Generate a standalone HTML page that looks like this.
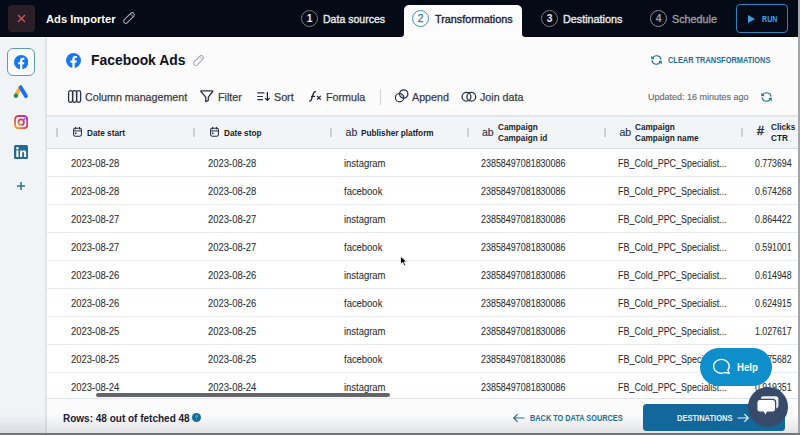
<!DOCTYPE html>
<html><head><meta charset="utf-8">
<style>
*{box-sizing:border-box;margin:0;padding:0}
html,body{width:800px;height:435px;overflow:hidden;background:#9c9ea1}
body{font-family:"Liberation Sans",sans-serif;position:relative}
.a{position:absolute;white-space:nowrap;line-height:1}
svg.a{line-height:normal}
#win{position:absolute;left:0;top:0;width:798px;height:433px;background:#fbfbfc;overflow:hidden}
.dk{position:absolute;background:#050b16}
.close{left:7.5px;top:5px;width:27px;height:27.3px;border-radius:4px;background:#2a1f27}
.ttl{color:#fff;font-weight:700;font-size:11.2px;left:46px;top:13.8px}
.step{color:#e8eaec;font-size:10.8px;top:13.7px;-webkit-text-stroke:0.35px currentColor}
.circ{position:absolute;width:17px;height:17px;border-radius:50%;border:1.2px solid #76797e;top:10px;color:#e6e8ea;font-size:10.3px;font-weight:700;text-align:center;line-height:16px}
.run{left:736px;top:4px;width:52px;height:29px;border:1.1px solid #2f84ba;border-radius:4px}
#side{position:absolute;left:0;top:38px;width:47px;height:395px;background:#f0f4f7;border-right:2px solid #e0e4e8}
.sel{left:7px;top:48px;width:28px;height:28px;border:1.3px solid #5d9bb9;border-radius:6px;background:#f8fafb}
.tb{color:#3b3e47;font-size:10.7px;top:91.8px;-webkit-text-stroke:0.25px currentColor}
.blue{color:#236e99}
#table{position:absolute;left:47px;top:115px;width:751px;height:284px;background:#fff;border-top:2px solid #e2e5e9;border-bottom:1px solid #e2e5e9;overflow:hidden}
.th{position:absolute;left:-1px;top:0;width:752px;height:32px;background:#f1f5f8;border-bottom:1px solid #d9dde2}
.row{position:absolute;left:-1px;width:752px;height:28px;border-bottom:1px solid #e8ebee;background:#fff}
.cell{position:absolute;top:10.4px;font-size:10px;line-height:1;color:#2c2f35;-webkit-text-stroke:0.08px #2c2f35;white-space:nowrap;transform-origin:0 0;transform:scaleX(0.945)}
.c85{transform:scaleX(0.893)}
.c83{transform:scaleX(0.877)}
.hd{position:absolute;font-size:9.2px;font-weight:700;color:#1b1e28;white-space:nowrap;line-height:1;transform-origin:0 0;transform:scaleX(0.895)}
.hd2{position:absolute;top:4.9px;font-size:9.2px;font-weight:700;color:#1b1e28;white-space:nowrap;line-height:11px;transform-origin:0 0;transform:scaleX(0.895)}
.dv{position:absolute;top:10.5px;width:1.4px;margin-left:-0.6px;height:9.5px;background:#cdd1d5}
.ic{position:absolute}
.ab{position:absolute;top:9.7px;font-size:10.5px;line-height:1;color:#2f3349;white-space:nowrap;-webkit-text-stroke:0.15px #2f3349}
</style></head>
<body>
<div id="win">
  <!-- header -->
  <div class="dk" style="left:0;top:0;width:404px;height:37px;border-bottom-right-radius:4px;box-shadow:inset 0 -1px 0 #000205"></div>
  <div class="dk" style="left:522px;top:0;width:276px;height:37px;border-bottom-left-radius:4px;box-shadow:inset 0 -1px 0 #000205"></div>
  <div class="dk" style="left:400px;top:0;width:126px;height:10px"></div>
  <div class="a" style="left:404px;top:5px;width:118px;height:40px;background:#fcfcfd;border-radius:5px 5px 0 0"></div>

  <div class="a close"></div>
  <svg class="a" style="left:16.6px;top:14px" width="9" height="9" viewBox="0 0 9 9"><path d="M1 1L8 8M8 1L1 8" stroke="#e3524f" stroke-width="1.2"/></svg>
  <div class="a ttl">Ads Importer</div>
  <svg class="a" style="left:120.5px;top:10.25px" width="16" height="16" viewBox="0 0 16 16"><g transform="rotate(-45 8 8)"><rect x="1.4" y="5.9" width="13.2" height="4.2" rx="2.1" fill="none" stroke="#aeb4bb" stroke-width="1"/><path d="M11.9 5.9V10.1" stroke="#aeb4bb" stroke-width="0.9"/></g></svg>

  <div class="circ" style="left:301px">1</div>
  <div class="a step" style="left:323px;transform-origin:0 0;transform:scaleX(0.975)">Data sources</div>
  <div class="circ" style="left:412px;border-color:#3b8fb9;color:#2b7aa6;font-weight:400;-webkit-text-stroke:0.25px #2b7aa6">2</div>
  <div class="a step" style="left:435px;color:#1d2235">Transformations</div>
  <div class="circ" style="left:541px">3</div>
  <div class="a step" style="left:563px">Destinations</div>
  <div class="circ" style="left:650px;color:#9c9ea2;border-color:#8d9094">4</div>
  <div class="a step" style="left:672px;color:#9c9ea2">Schedule</div>
  <div class="a run"></div>
  <svg class="a" style="left:748px;top:14.6px" width="7" height="8" viewBox="0 0 7 8"><path d="M0 0L7 4L0 8Z" fill="#3d9fd8"/></svg>
  <div class="a" style="left:761.8px;top:14.5px;font-size:8.3px;font-weight:700;color:#3ea3de;transform-origin:0 0;transform:scaleX(0.86)">RUN</div>

  <!-- sidebar -->
  <div id="side"></div>
  <div class="a sel"></div>


  <!-- sidebar icons -->
  <svg class="a" style="left:13.8px;top:54.8px" width="14.4" height="14.4" viewBox="0 0 1024 1024"><circle cx="512" cy="512" r="512" fill="#1877f2"/><path d="M711.3,660,734,512H592V415.96C592,375.47,611.84,336,675.44,336H740V210s-58.59-10-114.61-10C508.44,200,432,270.88,432,399.2V512H302V660H432v357.78a517.58,517.58,0,0,0,160,0V660Z" fill="#fff"/></svg>
  <svg class="a" style="left:12px;top:84px" width="18" height="16" viewBox="0 0 18 16"><path d="M8.4 3.4L3.9 11.3" stroke="#f4b23f" stroke-width="3.9" stroke-linecap="round"/><path d="M8.7 3.4L13.9 12.1" stroke="#1c6ef5" stroke-width="3.9" stroke-linecap="round"/><circle cx="3.9" cy="11.7" r="2.2" fill="#2e8b48"/></svg>
  <svg class="a" style="left:14px;top:114.7px" width="14.3" height="14.3" viewBox="0 0 14 14"><defs><linearGradient id="ig" x1="0" y1="1" x2="1" y2="0"><stop offset="0" stop-color="#f9a23a"/><stop offset="0.5" stop-color="#e8394f"/><stop offset="1" stop-color="#a03bb5"/></linearGradient></defs><rect x="1" y="1" width="12" height="12" rx="3.3" fill="none" stroke="url(#ig)" stroke-width="1.9"/><circle cx="7" cy="7" r="2.7" fill="none" stroke="url(#ig)" stroke-width="1.8"/><circle cx="10.4" cy="3.6" r="0.9" fill="#c0398f"/></svg>
  <div class="a" style="left:14px;top:145px;width:14px;height:14px;background:#1d6a9b;border-radius:1.5px"></div>
  <svg class="a" style="left:14px;top:145px" width="14" height="14" viewBox="0 0 14 14"><rect x="2.3" y="5.4" width="2.2" height="6.6" fill="#fff"/><circle cx="3.4" cy="3.3" r="1.3" fill="#fff"/><path d="M6.1 12V5.4H8.2V6.4Q8.9 5.2 10.2 5.2Q12.2 5.2 12.2 7.7V12H10.1V8.2Q10.1 7 9.2 7Q8.2 7 8.2 8.3V12Z" fill="#fff"/></svg>
  <svg class="a" style="left:16px;top:180.5px" width="10" height="10" viewBox="0 0 10 10"><path d="M5 1V9M1 5H9" stroke="#2a6f93" stroke-width="1.5"/></svg>

  <!-- title icons -->
  <svg class="a" style="left:66px;top:52.5px" width="15" height="15" viewBox="0 0 1024 1024"><circle cx="512" cy="512" r="512" fill="#1877f2"/><path d="M711.3,660,734,512H592V415.96C592,375.47,611.84,336,675.44,336H740V210s-58.59-10-114.61-10C508.44,200,432,270.88,432,399.2V512H302V660H432v357.78a517.58,517.58,0,0,0,160,0V660Z" fill="#fff"/></svg>
  <svg class="a" style="left:191.2px;top:53px" width="15" height="15" viewBox="0 0 15 15"><g transform="rotate(-45 7.5 7.5)"><rect x="1.4" y="5.4" width="12.2" height="4.2" rx="2.1" fill="none" stroke="#a3a8ae" stroke-width="1.05"/><path d="M10.9 5.4V9.6" stroke="#a3a8ae" stroke-width="0.9"/></g></svg>

  <!-- toolbar icons -->
  <svg class="a" style="left:67px;top:89px" width="15" height="15" viewBox="0 0 15 15"><rect x="1.6" y="1.6" width="4" height="11.8" rx="1.8" fill="none" stroke="#2d3146" stroke-width="1.3"/><rect x="5.6" y="1.6" width="4" height="11.8" rx="1.8" fill="none" stroke="#2d3146" stroke-width="1.3"/><rect x="9.6" y="1.6" width="4" height="11.8" rx="1.8" fill="none" stroke="#2d3146" stroke-width="1.3"/></svg>
  <svg class="a" style="left:199px;top:89px" width="16" height="15" viewBox="0 0 16 15"><path d="M2.2 1.9H13.4Q14.1 1.9 13.7 2.5L9.3 8.1V11.4L6.7 12.6V8.1L1.9 2.5Q1.5 1.9 2.2 1.9Z" fill="none" stroke="#2d3146" stroke-width="1.25" stroke-linejoin="round"/></svg>
  <svg class="a" style="left:256px;top:90px" width="16" height="12" viewBox="0 0 16 12"><path d="M1.3 2.9H8.4M1.3 6.5H7M1.3 9.6H7" stroke="#2d3146" stroke-width="1.2"/><path d="M11.4 1.9V10.3M9.1 8.1L11.4 10.4L13.7 8.1" fill="none" stroke="#1f2336" stroke-width="1.25"/></svg>
  <svg class="a" style="left:307px;top:89px" width="16" height="14" viewBox="0 0 16 14"><path d="M2.2 11.8Q3.5 12.6 4.3 10.8L6.6 4Q7.3 2.2 8.9 2.8" fill="none" stroke="#1f2336" stroke-width="1.3"/><path d="M4 7.4H8" stroke="#1f2336" stroke-width="1.2"/><path d="M10 6.9L13.8 10.6M13.8 6.9L10 10.6" stroke="#1f2336" stroke-width="1.3"/></svg>
  <svg class="a" style="left:394px;top:89px" width="16" height="16" viewBox="0 0 16 16"><circle cx="5.6" cy="8.7" r="4.2" fill="none" stroke="#2d3146" stroke-width="1.2"/><circle cx="9.7" cy="5" r="4.2" fill="none" stroke="#2d3146" stroke-width="1.2"/><path d="M6.2 4.9L9.6 8.3" stroke="#555a6c" stroke-width="0.8"/></svg>
  <svg class="a" style="left:461px;top:91px" width="16" height="12" viewBox="0 0 16 12"><circle cx="5.5" cy="5.8" r="4.4" fill="none" stroke="#2d3146" stroke-width="1.3"/><circle cx="10.3" cy="5.8" r="4.4" fill="none" stroke="#2d3146" stroke-width="1.3"/></svg>

  <svg class="a" style="left:650px;top:54px" width="13" height="12" viewBox="0 0 13 12"><path d="M2.4 4.4A4.6 4.6 0 0 1 11.1 5.6" fill="none" stroke="#1f6f9a" stroke-width="1.15"/><path d="M10.6 7.6A4.6 4.6 0 0 1 1.9 6.4" fill="none" stroke="#1f6f9a" stroke-width="1.15"/><path d="M1.2 1.8L1.3 5.3L4.6 4.9Z" fill="#1f6f9a"/><path d="M11.8 10.2L11.7 6.7L8.4 7.1Z" fill="#1f6f9a"/></svg>
  <svg class="a" style="left:759.5px;top:90.5px" width="13" height="12" viewBox="0 0 13 12"><path d="M2.4 4.4A4.6 4.6 0 0 1 11.1 5.6" fill="none" stroke="#1f6f9a" stroke-width="1.15"/><path d="M10.6 7.6A4.6 4.6 0 0 1 1.9 6.4" fill="none" stroke="#1f6f9a" stroke-width="1.15"/><path d="M1.2 1.8L1.3 5.3L4.6 4.9Z" fill="#1f6f9a"/><path d="M11.8 10.2L11.7 6.7L8.4 7.1Z" fill="#1f6f9a"/></svg>

  <!-- title + toolbar -->
  <div class="a" style="left:91px;top:54px;font-size:13.9px;font-weight:700;color:#0e1321">Facebook Ads</div>
  <div class="a tb" style="left:85px">Column management</div>
  <div class="a tb" style="left:218px">Filter</div>
  <div class="a tb" style="left:274px">Sort</div>
  <div class="a tb" style="left:326px">Formula</div>
  <div class="a" style="left:380px;top:89px;width:1px;height:16px;background:#cfd3d7"></div>
  <div class="a tb" style="left:412px">Append</div>
  <div class="a tb" style="left:480px">Join data</div>
  <div class="a blue" style="left:668px;top:56px;font-size:8.5px;font-weight:700;transform-origin:0 0;transform:scaleX(0.872)">CLEAR TRANSFORMATIONS</div>
  <div class="a" style="left:648px;top:92.3px;font-size:9.8px;color:#62656d;-webkit-text-stroke:0.1px #62656d;transform-origin:0 0;transform:scaleX(0.918)">Updated: 16 minutes ago</div>

  <!-- table -->
  <div id="table">
    <div class="th">
      <div class="dv" style="left:11px"></div><div class="dv" style="left:148px"></div><div class="dv" style="left:285px"></div><div class="dv" style="left:422px"></div><div class="dv" style="left:559px"></div><div class="dv" style="left:696px"></div>
      <svg class="ic" style="left:27px;top:9.5px" width="9" height="10" viewBox="0 0 9 10"><rect x="0.55" y="1.2" width="7.9" height="8" rx="1.6" fill="none" stroke="#2d3146" stroke-width="1.05"/><path d="M2.5 0.2V1.8M6.5 0.2V1.8" stroke="#2d3146" stroke-width="1.2" stroke-linecap="round"/><path d="M0.8 3.9H8.2" stroke="#2d3146" stroke-width="1"/><rect x="1.9" y="5.5" width="1.6" height="1.6" fill="#2d3146"/></svg>
      <span class="hd" style="left:41.4px;top:11.6px">Date start</span>
      <svg class="ic" style="left:164px;top:9.5px" width="9" height="10" viewBox="0 0 9 10"><rect x="0.55" y="1.2" width="7.9" height="8" rx="1.6" fill="none" stroke="#2d3146" stroke-width="1.05"/><path d="M2.5 0.2V1.8M6.5 0.2V1.8" stroke="#2d3146" stroke-width="1.2" stroke-linecap="round"/><path d="M0.8 3.9H8.2" stroke="#2d3146" stroke-width="1"/><rect x="1.9" y="5.5" width="1.6" height="1.6" fill="#2d3146"/></svg>
      <span class="hd" style="left:178px;top:11.6px">Date stop</span>
      <span class="ab" style="left:299.6px">ab</span><span class="hd" style="left:315px;top:11.6px">Publisher platform</span>
      <span class="ab" style="left:436px">ab</span><span class="hd2" style="left:451.6px;">Campaign<br>Campaign id</span>
      <span class="ab" style="left:573.5px">ab</span><span class="hd2" style="left:588.5px;">Campaign<br>Campaign name</span>
      <span class="ab" style="left:711px;font-size:12.5px;top:7.9px;-webkit-text-stroke:0.45px #2f3349">#</span><span class="hd2" style="left:725.3px;">Clicks<br>CTR</span>
    </div>
    <div class="row" style="top:32px"><span class="cell" style="left:25px">2023-08-28</span><span class="cell" style="left:161.6px">2023-08-28</span><span class="cell" style="left:298.4px">instagram</span><span class="cell c85" style="left:435px">23858497081830086</span><span class="cell c85" style="left:572.3px">FB_Cold_PPC_Specialist...</span><span class="cell c83" style="left:708.6px">0.773694</span></div>
    <div class="row" style="top:60px"><span class="cell" style="left:25px">2023-08-28</span><span class="cell" style="left:161.6px">2023-08-28</span><span class="cell" style="left:298.4px">facebook</span><span class="cell c85" style="left:435px">23858497081830086</span><span class="cell c85" style="left:572.3px">FB_Cold_PPC_Specialist...</span><span class="cell c83" style="left:708.6px">0.674268</span></div>
    <div class="row" style="top:88px"><span class="cell" style="left:25px">2023-08-27</span><span class="cell" style="left:161.6px">2023-08-27</span><span class="cell" style="left:298.4px">instagram</span><span class="cell c85" style="left:435px">23858497081830086</span><span class="cell c85" style="left:572.3px">FB_Cold_PPC_Specialist...</span><span class="cell c83" style="left:708.6px">0.864422</span></div>
    <div class="row" style="top:116px"><span class="cell" style="left:25px">2023-08-27</span><span class="cell" style="left:161.6px">2023-08-27</span><span class="cell" style="left:298.4px">facebook</span><span class="cell c85" style="left:435px">23858497081830086</span><span class="cell c85" style="left:572.3px">FB_Cold_PPC_Specialist...</span><span class="cell c83" style="left:708.6px">0.591001</span></div>
    <div class="row" style="top:144px"><span class="cell" style="left:25px">2023-08-26</span><span class="cell" style="left:161.6px">2023-08-26</span><span class="cell" style="left:298.4px">instagram</span><span class="cell c85" style="left:435px">23858497081830086</span><span class="cell c85" style="left:572.3px">FB_Cold_PPC_Specialist...</span><span class="cell c83" style="left:708.6px">0.614948</span></div>
    <div class="row" style="top:172px"><span class="cell" style="left:25px">2023-08-26</span><span class="cell" style="left:161.6px">2023-08-26</span><span class="cell" style="left:298.4px">facebook</span><span class="cell c85" style="left:435px">23858497081830086</span><span class="cell c85" style="left:572.3px">FB_Cold_PPC_Specialist...</span><span class="cell c83" style="left:708.6px">0.624915</span></div>
    <div class="row" style="top:200px"><span class="cell" style="left:25px">2023-08-25</span><span class="cell" style="left:161.6px">2023-08-25</span><span class="cell" style="left:298.4px">instagram</span><span class="cell c85" style="left:435px">23858497081830086</span><span class="cell c85" style="left:572.3px">FB_Cold_PPC_Specialist...</span><span class="cell c83" style="left:708.6px">1.027617</span></div>
    <div class="row" style="top:228px"><span class="cell" style="left:25px">2023-08-25</span><span class="cell" style="left:161.6px">2023-08-25</span><span class="cell" style="left:298.4px">facebook</span><span class="cell c85" style="left:435px">23858497081830086</span><span class="cell c85" style="left:572.3px">FB_Cold_PPC_Specialist...</span><span class="cell c83" style="left:708.6px">0.675682</span></div>
    <div class="row" style="top:256px"><span class="cell" style="left:25px">2023-08-24</span><span class="cell" style="left:161.6px">2023-08-24</span><span class="cell" style="left:298.4px">instagram</span><span class="cell c85" style="left:435px">23858497081830086</span><span class="cell c85" style="left:572.3px">FB_Cold_PPC_Specialist...</span><span class="cell c83" style="left:708.6px">0.919351</span></div>
  </div>

  
  <div class="a" style="left:0;top:414px;width:798px;height:19px;background:linear-gradient(rgba(30,35,45,0),rgba(30,35,45,0.11));pointer-events:none"></div>
  <!-- footer -->
  <div class="a" style="left:63px;top:413.5px;font-size:10px;font-weight:700;color:#1c2036">Rows: 48 out of fetched 48</div>
  <div class="a" style="left:191.5px;top:413px;width:9.3px;height:9.3px;border-radius:50%;background:#146b99"></div>
  <div class="a blue" style="left:530px;top:413.6px;font-size:9px;font-weight:700;transform-origin:0 0;transform:scaleX(0.815)">BACK TO DATA SOURCES</div>
  <div class="a" style="left:643px;top:404px;width:142px;height:27px;border-radius:3.5px;background:#12689a"></div>
  <div class="a" style="left:677px;top:414px;font-size:8.5px;font-weight:700;color:#eaf2f7;transform-origin:0 0;transform:scaleX(0.885)">DESTINATIONS</div>


  <svg class="a" style="left:192px;top:413.3px" width="9" height="9" viewBox="0 0 9 9"><path d="M3.6 3.5Q3.7 2.6 4.6 2.6Q5.5 2.7 5.4 3.5Q5.3 4.1 4.6 4.5V5.2" fill="none" stroke="#b9d6e6" stroke-width="0.75"/><circle cx="4.6" cy="6.4" r="0.45" fill="#b9d6e6"/></svg>
  <svg class="a" style="left:512px;top:413px" width="14" height="10" viewBox="0 0 14 10"><path d="M12.5 5H1.8M5.6 1.2L1.8 5L5.6 8.8" fill="none" stroke="#2b6d90" stroke-width="1.2"/></svg>
  <svg class="a" style="left:736px;top:413px" width="14" height="10" viewBox="0 0 14 10"><path d="M1.5 5H12.2M8.4 1.2L12.2 5L8.4 8.8" fill="none" stroke="#eaf2f7" stroke-width="1.2"/></svg>
  <div class="a" style="left:96px;top:392.5px;width:293.5px;height:4.2px;border-radius:2.1px;background:#636568"></div>

  <!-- help -->
  <div class="a" style="left:700px;top:347.5px;width:72px;height:38px;border-radius:19px;background:#0e8fcb"></div>
  <div class="a" style="left:737.3px;top:362.6px;font-size:10px;font-weight:700;color:#fff;transform-origin:0 0;transform:scaleX(0.96)">Help</div>
  <div class="a" style="left:748px;top:387px;width:40px;height:40px;border-radius:50%;background:#374a69"></div>

  <svg class="a" style="left:710.7px;top:358px" width="20" height="17" viewBox="0 0 20 17"><path d="M18.3 15.3L16.8 12.3A7.8 6.9 0 1 0 13.9 14.5Z" fill="none" stroke="#fff" stroke-width="1.3" stroke-linejoin="round"/></svg>
  <svg class="a" style="left:754px;top:394px" width="27" height="26" viewBox="0 0 27 26"><path d="M9.5 2.3H21.8Q24.4 2.3 24.4 5V11.6Q24.4 14.4 21.8 14.4H9.5Q6.8 14.4 6.8 11.6V5Q6.8 2.3 9.5 2.3Z" fill="#eef0f4"/><path d="M5.8 5.4H18.6Q21.6 5.4 21.6 8.4V15.4Q21.6 18.2 18.6 18.2H13.4L11.4 21.9L9.4 18.2H5.8Q2.8 18.2 2.8 15.4V8.4Q2.8 5.4 5.8 5.4Z" fill="#fff" stroke="#374a69" stroke-width="1.3"/></svg>
  <svg class="a" style="left:399px;top:255px" width="10" height="12" viewBox="0 0 10 12"><path d="M1.5 1.2V9.2L3.6 7.4L5.3 10.8L6.7 10.1L5 6.9H7.8Z" fill="#000" stroke="#fff" stroke-width="0.8" stroke-linejoin="round"/></svg>
</div>
<div class="a" style="left:0;top:433px;width:800px;height:2px;background:#737578"></div>
<div class="a" style="left:798px;top:0;width:2px;height:433px;background:#a3a5a8"></div>
</body></html>
